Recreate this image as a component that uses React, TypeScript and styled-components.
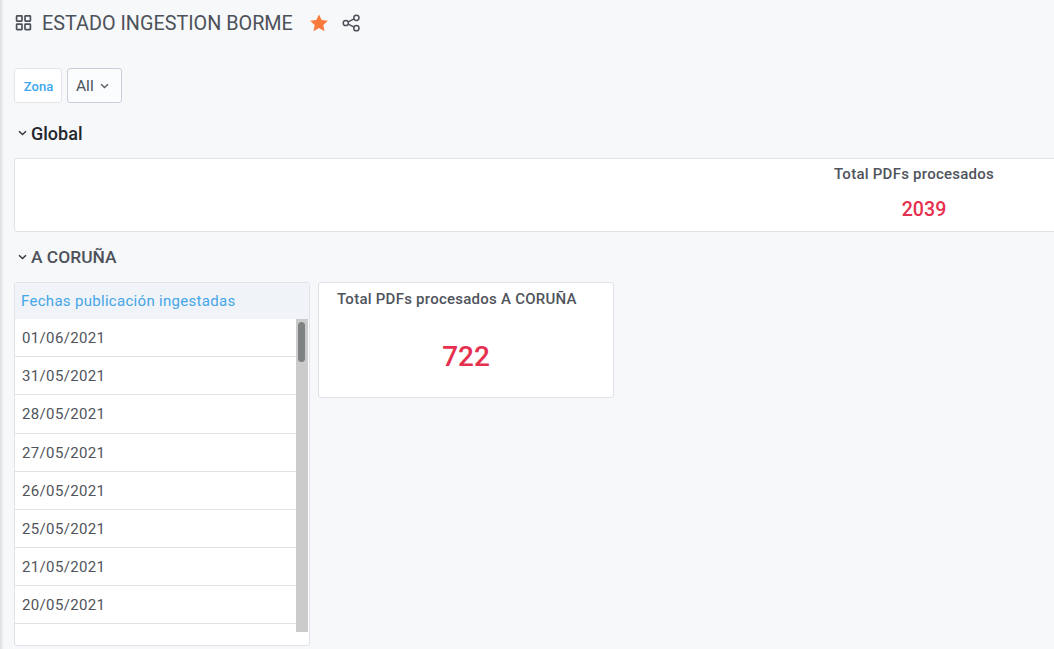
import React, { FC } from "react";
import styled, { createGlobalStyle } from "styled-components";

const GlobalStyle = createGlobalStyle`
  html, body {
    margin: 0;
    height: 100%;
    overflow: hidden;
    background: #f6f8fa;
    font-family: Roboto, "Liberation Sans", sans-serif;
  }
`;

const Page = styled.div`
  position: relative;
  width: 1054px;
  height: 649px;
  overflow: hidden;
  box-sizing: border-box;
  padding: 0 0 0 14px;

  &::before {
    content: "";
    position: absolute;
    left: 0;
    top: 0;
    bottom: 0;
    width: 4px;
    background: linear-gradient(to right, #dcdde0, rgba(246, 248, 250, 0));
  }
`;

const Header = styled.header`
  display: flex;
  align-items: center;
  height: 46px;
  color: #4a4f57;
`;

const Title = styled.h1`
  margin: 0 17px 0 10px;
  padding-top: 1px;
  font-size: 19.8px;
  font-weight: 400;
  line-height: 46px;
  color: #4d5159;
  white-space: nowrap;
`;

const HeaderIcon = styled.svg`
  display: block;
  flex: none;
`;

const ShareIcon = styled(HeaderIcon)`
  margin-left: 14px;
`;

const Filters = styled.div`
  display: flex;
  gap: 5px;
  margin-top: 22px;
  height: 35px;
`;

const FilterLabel = styled.div`
  display: flex;
  align-items: center;
  justify-content: center;
  box-sizing: border-box;
  width: 48px;
  background: #fff;
  border: 1px solid #e2e5ea;
  border-radius: 3px;
  color: #3ea7ee;
  font-size: 13px;
  font-weight: 500;
  padding: 2px 0 0 1px;
`;

const FilterSelect = styled.div`
  display: flex;
  align-items: center;
  box-sizing: border-box;
  width: 55px;
  padding: 1px 0 0 8px;
  gap: 6px;
  background: #fbfcfd;
  border: 1px solid #c7d0da;
  border-radius: 3px;
  color: #4d5159;
  font-size: 15.5px;
`;

const Section = styled.div<{ $top: number }>`
  display: flex;
  align-items: center;
  gap: 4px;
  height: 24px;
  margin-top: ${(p) => p.$top}px;
  padding-left: 4px;
`;

const SectionTitle = styled.h2<{ $muted?: boolean }>`
  margin: 0;
  font-size: ${(p) => (p.$muted ? "17.4px" : "18px")};
  font-weight: 500;
  color: ${(p) => (p.$muted ? "#4d5159" : "#23262b")};
`;

const GlobalPanel = styled.section`
  box-sizing: border-box;
  width: 1820px;
  height: 74px;
  margin-top: 13px;
  background: #fff;
  border: 1px solid #e0e3e8;
  border-radius: 3px;
  text-align: center;
`;

const GlobalTitle = styled.div`
  padding: 6px 20px 0 0;
  font-size: 15px;
  font-weight: 500;
  letter-spacing: 0.25px;
  line-height: 18px;
  color: #50545c;
`;

const GlobalValue = styled.div`
  margin-top: 14px;
  font-size: 19.6px;
  font-weight: 500;
  line-height: 26px;
  color: #e5304f;
`;

const Columns = styled.div`
  display: flex;
  align-items: flex-start;
  gap: 8px;
  margin-top: 13px;
`;

const ListPanel = styled.section`
  box-sizing: border-box;
  width: 296px;
  height: 364px;
  background: #fff;
  border: 1px solid #e0e3e8;
  border-radius: 3px;
  overflow: hidden;
`;

const ListHeader = styled.div`
  height: 36px;
  padding-left: 6px;
  background: #f0f3f8;
  color: #44a6e8;
  font-size: 15px;
  letter-spacing: 0.3px;
  line-height: 36px;
`;

const ListBody = styled.div`
  display: flex;
  align-items: flex-start;
  padding-right: 1px;
`;

const Rows = styled.ul`
  flex: 1;
  margin: 0;
  padding: 0;
  list-style: none;
`;

const Row = styled.li`
  box-sizing: border-box;
  height: 38.18px;
  padding: 1px 0 0 7px;
  border-bottom: 1px solid #e1e3e6;
  color: #50545c;
  font-size: 15px;
  letter-spacing: 0.35px;
  line-height: 37px;
`;

const Track = styled.div`
  flex: none;
  position: relative;
  width: 12px;
  height: 313px;
  background: #cbcbcb;
`;

const Thumb = styled.div`
  position: absolute;
  left: 2px;
  top: 3px;
  width: 7px;
  height: 40px;
  border-radius: 4px;
  background: #7f8283;
`;

const Card = styled.section`
  box-sizing: border-box;
  width: 296px;
  height: 116px;
  background: #fff;
  border: 1px solid #e0e3e8;
  border-radius: 3px;
`;

const CardTitle = styled.div`
  padding: 7px 0 0 18px;
  font-size: 15px;
  font-weight: 500;
  letter-spacing: 0.25px;
  line-height: 18px;
  color: #50545c;
`;

const CardValue = styled.div`
  margin-top: 31px;
  text-align: center;
  font-size: 28px;
  font-weight: 500;
  line-height: 36px;
  color: #e5304f;
`;

const Chevron: FC<{ color?: string }> = ({ color = "#33363c" }) => (
  <svg width="9" height="6" viewBox="0 0 9 6" fill="none" style={{ flex: "none" }}>
    <path d="M1 1.2 4.5 4.6 8 1.2" stroke={color} strokeWidth="1.4" />
  </svg>
);

const dates = [
  "01/06/2021",
  "31/05/2021",
  "28/05/2021",
  "27/05/2021",
  "26/05/2021",
  "25/05/2021",
  "21/05/2021",
  "20/05/2021",
];

export default function App() {
  return (
    <Page>
      <GlobalStyle />
      <Header>
        <HeaderIcon width="18" height="18" viewBox="0 0 18 18" fill="none" stroke="#4d5159" strokeWidth="1.7">
          <rect x="2.6" y="1.8" width="5.4" height="5.4" rx="0.6" />
          <rect x="11" y="1.8" width="5.4" height="5.4" rx="0.6" />
          <rect x="2.6" y="10.2" width="5.4" height="5.4" rx="0.6" />
          <rect x="11" y="10.2" width="5.4" height="5.4" rx="0.6" />
        </HeaderIcon>
        <Title>ESTADO INGESTION BORME</Title>
        <HeaderIcon width="18" height="18" viewBox="0 0 18 18">
          <path d="M9 .4l2.7 5.7 6.2.7-4.6 4.3 1.2 6.1L9 14.1l-5.5 3.1 1.2-6.1L.1 6.8l6.2-.7z" fill="#fa7a3c" />
        </HeaderIcon>
        <ShareIcon width="18" height="18" viewBox="0 0 18 18" fill="none" stroke="#4d5159" strokeWidth="1.5">
          <circle cx="3.8" cy="9" r="2.6" />
          <circle cx="14.4" cy="3.8" r="2.6" />
          <circle cx="14.4" cy="14.2" r="2.6" />
          <path d="M6.2 7.8l5.9-2.9M6.2 10.2l5.9 2.9" />
        </ShareIcon>
      </Header>
      <Filters>
        <FilterLabel>Zona</FilterLabel>
        <FilterSelect>
          All
          <Chevron color="#5a5f67" />
        </FilterSelect>
      </Filters>
      <Section $top={18}>
        <Chevron />
        <SectionTitle>Global</SectionTitle>
      </Section>
      <GlobalPanel>
        <GlobalTitle>Total PDFs procesados</GlobalTitle>
        <GlobalValue>2039</GlobalValue>
      </GlobalPanel>
      <Section $top={13}>
        <Chevron />
        <SectionTitle $muted>A CORUÑA</SectionTitle>
      </Section>
      <Columns>
        <ListPanel>
          <ListHeader>Fechas publicación ingestadas</ListHeader>
          <ListBody>
            <Rows>
              {dates.map((date) => (
                <Row key={date}>{date}</Row>
              ))}
            </Rows>
            <Track>
              <Thumb />
            </Track>
          </ListBody>
        </ListPanel>
        <Card>
          <CardTitle>Total PDFs procesados A CORUÑA</CardTitle>
          <CardValue>722</CardValue>
        </Card>
      </Columns>
    </Page>
  );
}
